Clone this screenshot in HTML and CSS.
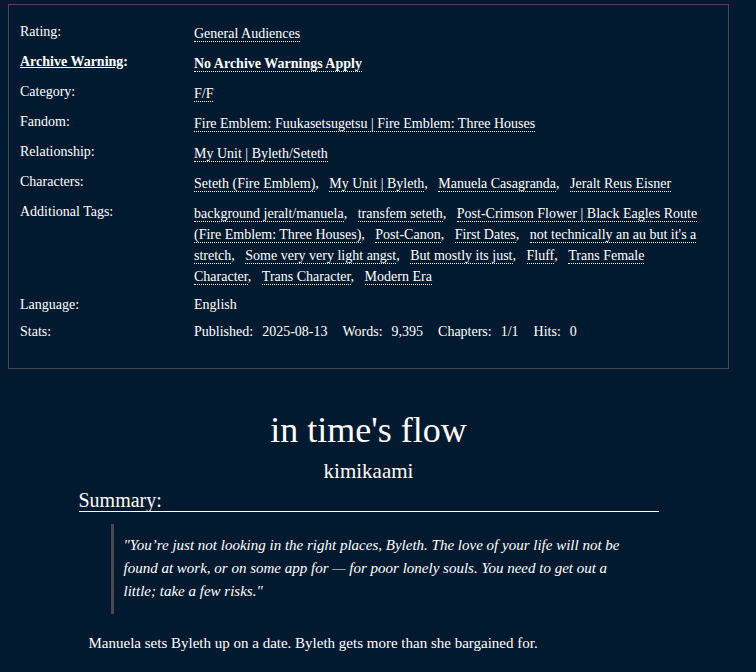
FILE: index.html
```html
<!DOCTYPE html>
<html>
<head>
    <meta http-equiv="Content-Type" content="text/html; charset=utf-8" />
    <title>in time's flow - kimikaami</title>
    <link rel="stylesheet" href="styles.css">
</head>
<body>
<div class="wrapper">
    <!-- work meta -->
    <dl class="meta">
        <dt>Rating:</dt>
        <dd class="tags"><ul><li><a href="#">General Audiences</a></li></ul></dd>

        <dt class="warning"><a href="#">Archive Warning</a>:</dt>
        <dd class="tags warning"><ul><li><a href="#">No Archive Warnings Apply</a></li></ul></dd>

        <dt>Category:</dt>
        <dd class="tags"><ul><li><a href="#">F/F</a></li></ul></dd>

        <dt>Fandom:</dt>
        <dd class="tags"><ul><li><a href="#">Fire Emblem: Fuukasetsugetsu | Fire Emblem: Three Houses</a></li></ul></dd>

        <dt>Relationship:</dt>
        <dd class="tags"><ul><li><a href="#">My Unit | Byleth/Seteth</a></li></ul></dd>

        <dt>Characters:</dt>
        <dd class="tags"><ul>
            <li><a href="#">Seteth (Fire Emblem)</a>,</li>
            <li><a href="#">My Unit | Byleth</a>,</li>
            <li><a href="#">Manuela Casagranda</a>,</li>
            <li><a href="#">Jeralt Reus Eisner</a></li>
        </ul></dd>

        <dt>Additional Tags:</dt>
        <dd class="tags"><ul>
            <li><a href="#">background jeralt/manuela</a>,</li>
            <li><a href="#">transfem seteth</a>,</li>
            <li><a href="#">Post-Crimson Flower | Black Eagles Route (Fire Emblem: Three Houses)</a>,</li>
            <li><a href="#">Post-Canon</a>,</li>
            <li><a href="#">First Dates</a>,</li>
            <li><a href="#">not technically an au but it's a stretch</a>,</li>
            <li><a href="#">Some very very light angst</a>,</li>
            <li><a href="#">But mostly its just</a>,</li>
            <li><a href="#">Fluff</a>,</li>
            <li><a href="#">Trans Female Character</a>,</li>
            <li><a href="#">Trans Character</a>,</li>
            <li><a href="#">Modern Era</a></li>
        </ul></dd>

        <dt>Language:</dt>
        <dd>English</dd>

        <dt>Stats:</dt>
        <dd>
            <dl class="stats">
                <dt>Published:</dt><dd>2025-08-13</dd>
                <dt>Words:</dt><dd>9,395</dd>
                <dt>Chapters:</dt><dd>1/1</dd>
                <dt>Hits:</dt><dd>0</dd>
            </dl>
        </dd>
    </dl>

    <!-- title, author and summary -->
    <div class="preface">
        <h2 class="title">in time's flow</h2>
        <h3 class="byline">kimikaami</h3>
        <div class="summary">
            <h3 class="heading">Summary:</h3>
            <blockquote>
                <p><em>"You’re just not looking in the right places, Byleth. The love of your life will not be found at work, or on some app for — for poor lonely souls. You need to get out a little; take a few risks."</em></p>
            </blockquote>
            <p class="blurb">Manuela sets Byleth up on a date. Byleth gets more than she bargained for.</p>
        </div>
    </div>
</div>
</body>
</html>
```

FILE: styles.css
```css
* {
    margin: 0;
    padding: 0;
}
body {
    background: #021a2f;
    color: #fff;
    font-family: "Liberation Serif", "Times New Roman", serif;
    font-size: 14px;
}
a {
    color: #fff;
    text-decoration: none;
}
.wrapper {
    width: 721px;
    margin-left: 8px;
    padding-top: 4px;
}

/* work meta box */
.meta {
    display: grid;
    grid-template-columns: 174px 1fr;
    row-gap: 6px;
    border: 1px solid #4b4552;
    padding: 16px 23px 26px 11px;
    line-height: 21px;
}
.meta .tags {
    padding: 2px 0 1px;
}
.meta ul {
    list-style: none;
}
.meta .tags li {
    display: inline;
    margin-right: 7px;
}
.meta .tags a {
    border-bottom: 1px dotted #fff;
}
.meta .warning {
    font-weight: bold;
}
.meta dt.warning a {
    text-decoration: underline;
}

/* stats on one line */
.stats {
    display: flex;
}
.stats dt {
    margin-right: 9px;
}
.stats dd {
    margin-right: 15px;
}

/* preface */
.preface {
    text-align: center;
}
.title {
    margin-top: 41px;
    font-size: 36px;
    font-weight: normal;
    line-height: 41px;
}
.byline {
    margin-top: 8px;
    font-size: 21px;
    font-weight: normal;
    line-height: 24px;
}
.summary {
    width: 580px;
    margin: 6px auto 0;
    text-align: left;
}
.summary .heading {
    font-size: 20px;
    font-weight: normal;
    line-height: 22px;
    border-bottom: 1px solid #fff;
}
.summary blockquote {
    margin: 12px 30px 0 32px;
    padding: 10px 0 11px 10px;
    border-left: 3px solid #4b4552;
    font-size: 15px;
    line-height: 23px;
}
.summary .blurb {
    margin-top: 18px;
    padding-left: 10px;
    font-size: 15px;
    line-height: 23px;
}
```
